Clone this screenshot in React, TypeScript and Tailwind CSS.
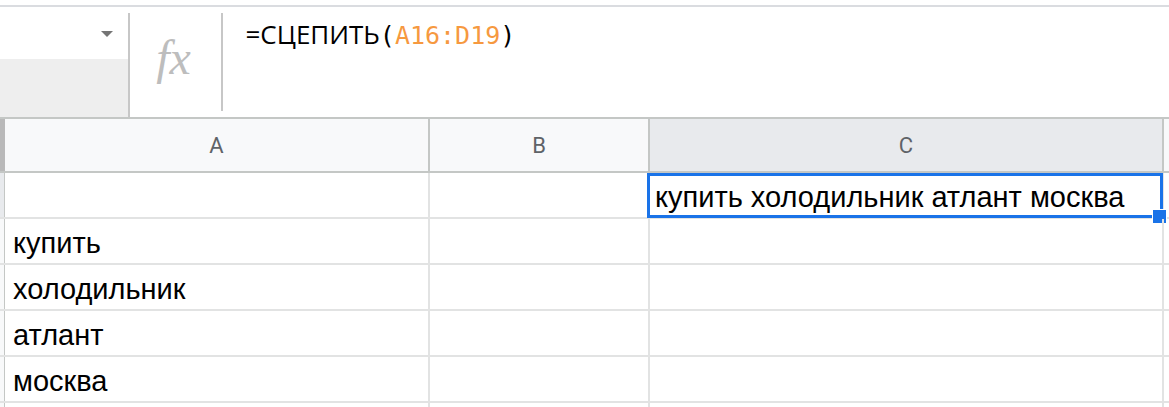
import React from 'react';

const rows = ['', 'купить', 'холодильник', 'атлант', 'москва', ''];

const HeaderCell: React.FC<{ label: string; width: string; active?: boolean }> = ({ label, width, active }) => (
  <div
    className={`${width} h-full flex items-center justify-center border-r-2 border-[#c4c7c5] text-[22px] text-[#5f6368] ${
      active ? 'bg-[#e8eaed]' : 'bg-[#f8f9fa]'
    }`}
    style={{ fontFamily: 'Roboto, Arial, sans-serif' }}
  >
    {label}
  </div>
);

const App: React.FC = () => {
  return (
    <div className="w-[1169px] h-[407px] overflow-hidden bg-white" style={{ fontFamily: '"Liberation Sans", Arial, sans-serif' }}>
      {/* formula bar */}
      <div className="pt-[5px]">
        <div className="flex h-[114px] border-t-2 border-[#dadce0] border-b-2 border-b-[#c4c7c5]">
          {/* name box */}
          <div className="w-[128px] flex flex-col">
            <div className="h-[52px] flex justify-end items-start pt-[24px] pr-[15px]">
              <div className="w-0 h-0 border-l-[6px] border-r-[6px] border-t-[6px] border-l-transparent border-r-transparent border-t-[#757575]" />
            </div>
            <div className="flex-1 bg-[#eeeeee]" />
          </div>
          <div className="w-[2px] mt-[6px] bg-[#c7c7c7]" />
          {/* fx */}
          <div className="w-[91px] flex items-start justify-center pt-[27px]">
            <span
              className="text-[48px] leading-[48px] italic text-[#bdbdbd] pr-[4px]"
              style={{ fontFamily: '"Liberation Serif", "Times New Roman", serif' }}
            >
              fx
            </span>
          </div>
          <div className="w-[1.5px] mt-[6px] mb-[6px] bg-[#c7c7c7]" />
          {/* formula */}
          <div className="flex-1 pl-[23px] pt-[9px] text-[26px] leading-[36px] text-black whitespace-nowrap">
            <span style={{ fontFamily: '"Open Sans", "Noto Sans", sans-serif' }}>=СЦЕПИТЬ</span>
            <span className="text-[25px]" style={{ fontFamily: '"DejaVu Sans Mono", "Liberation Mono", monospace' }}>
              (<span className="text-[#f6993f]">A16:D19</span>)
            </span>
          </div>
        </div>
      </div>

      {/* column headers */}
      <div className="flex h-[54px] border-b-2 border-[#c4c7c5]">
        <div className="w-[5px] h-full bg-[#b9b9b9]" />
        <HeaderCell label="A" width="w-[425px]" />
        <HeaderCell label="B" width="w-[220px]" />
        <HeaderCell label="C" width="w-[514px]" active />
        <div className="flex-1 bg-[#f8f9fa]" />
      </div>

      {/* rows */}
      {rows.map((text, i) => (
        <div key={i} className="flex h-[46px] border-b-2 border-[#e2e3e3] text-[29px] leading-[29px] text-black">
          <div className={`w-[5px] h-full border-r-[1.5px] border-[#c4c7c5] ${i === 0 ? 'bg-[#e8eaed]' : 'bg-[#f8f9fa]'}`} />
          <div className="w-[425px] h-full flex items-end pl-[8px] pb-[5px] border-r-2 border-[#e2e3e3] whitespace-nowrap">
            {text}
          </div>
          <div className="w-[220px] h-full border-r-2 border-[#e2e3e3]" />
          <div className="w-[514px] h-full border-r-2 border-[#e2e3e3] relative">
            {i === 0 && (
              <>
                <div className="absolute -left-[3px] top-0 -right-[1px] -bottom-[1px] border-[3px] border-[#1a73e8] flex items-end pl-[5px] pb-[3px] whitespace-nowrap">
                  купить холодильник атлант москва
                </div>
                <div className="absolute -right-[5px] -bottom-[7px] w-[15px] h-[15px] bg-[#1a73e8] border border-white" />
              </>
            )}
          </div>
          <div className="flex-1" />
        </div>
      ))}
    </div>
  );
};

export default App;
